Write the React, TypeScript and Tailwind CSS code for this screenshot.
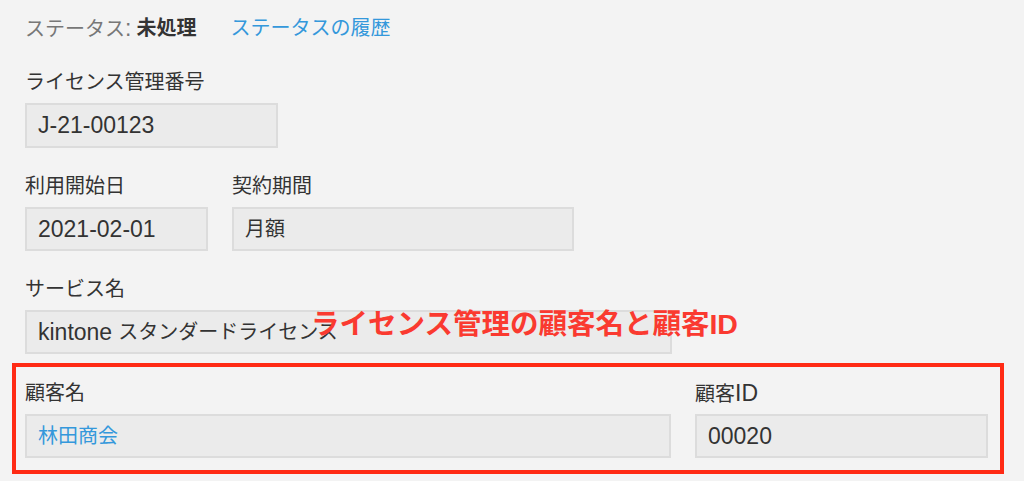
import React from "react";

const FONT = "font-['Liberation_Sans','Noto_Sans_CJK_JP',sans-serif]";

function Label({ children }: { children: React.ReactNode }) {
  return <div className="mb-[9px] h-6 text-[20px] leading-6 text-[#333]">{children}</div>;
}

function Box({ width, children }: { width: string; children: React.ReactNode }) {
  return (
    <div className={`${width} flex h-[44px] items-center border-2 border-[#dcdcdc] bg-[#ebebeb] px-[11px] text-[20px] text-[#333]`}>
      {children}
    </div>
  );
}

// latin runs in the reference render a bit larger than the kana/kanji
const Latin = ({ children }: { children: React.ReactNode }) => <span className="text-[23px]">{children}</span>;

export default function App() {
  return (
    <div className={`relative h-[481px] w-[1024px] overflow-hidden bg-[#f3f3f3] pl-[25px] pt-[16px] ${FONT}`}>
      <div className="flex h-6 items-center text-[20px] leading-6">
        <span className="text-[#777]">
          ステータス<Latin>:</Latin>
        </span>
        <span className="ml-[5px] font-bold text-[#333]">未処理</span>
        <a className="ml-[34px] text-[#3498db]">ステータスの履歴</a>
      </div>

      <div className="mt-[30px]">
        <Label>ライセンス管理番号</Label>
        <Box width="w-[253px] h-[45px]">
          <Latin>J-21-00123</Latin>
        </Box>
      </div>

      <div className="mt-[26px] flex gap-6">
        <div>
          <Label>利用開始日</Label>
          <Box width="w-[183px]">
            <Latin>2021-02-01</Latin>
          </Box>
        </div>
        <div>
          <Label>契約期間</Label>
          <Box width="w-[342px]">月額</Box>
        </div>
      </div>

      <div className="mt-[26px]">
        <Label>サービス名</Label>
        <Box width="w-[647px]">
          <Latin>kintone</Latin>
          <span className="ml-[6px]">スタンダードライセンス</span>
        </Box>
      </div>

      <div className="-ml-[13px] mt-[9px] flex h-[111px] w-[992px] gap-6 border-4 border-[#ff2a14] pb-[12px] pl-[9px] pr-[12px] pt-[14px]">
        <div>
          <Label>顧客名</Label>
          <Box width="w-[646px]">
            <a className="text-[#3498db]">林田商会</a>
          </Box>
        </div>
        <div>
          <Label>
            顧客<Latin>ID</Latin>
          </Label>
          <Box width="w-[293px]">
            <Latin>00020</Latin>
          </Box>
        </div>
      </div>

      {/* annotation overlay, sits on top of the service name box like in the screenshot */}
      <div className="absolute left-[311px] top-[306px] text-[28.5px] font-bold leading-[36px] text-[#fa3a30]">
        ライセンス管理の顧客名と顧客ID
      </div>
    </div>
  );
}
